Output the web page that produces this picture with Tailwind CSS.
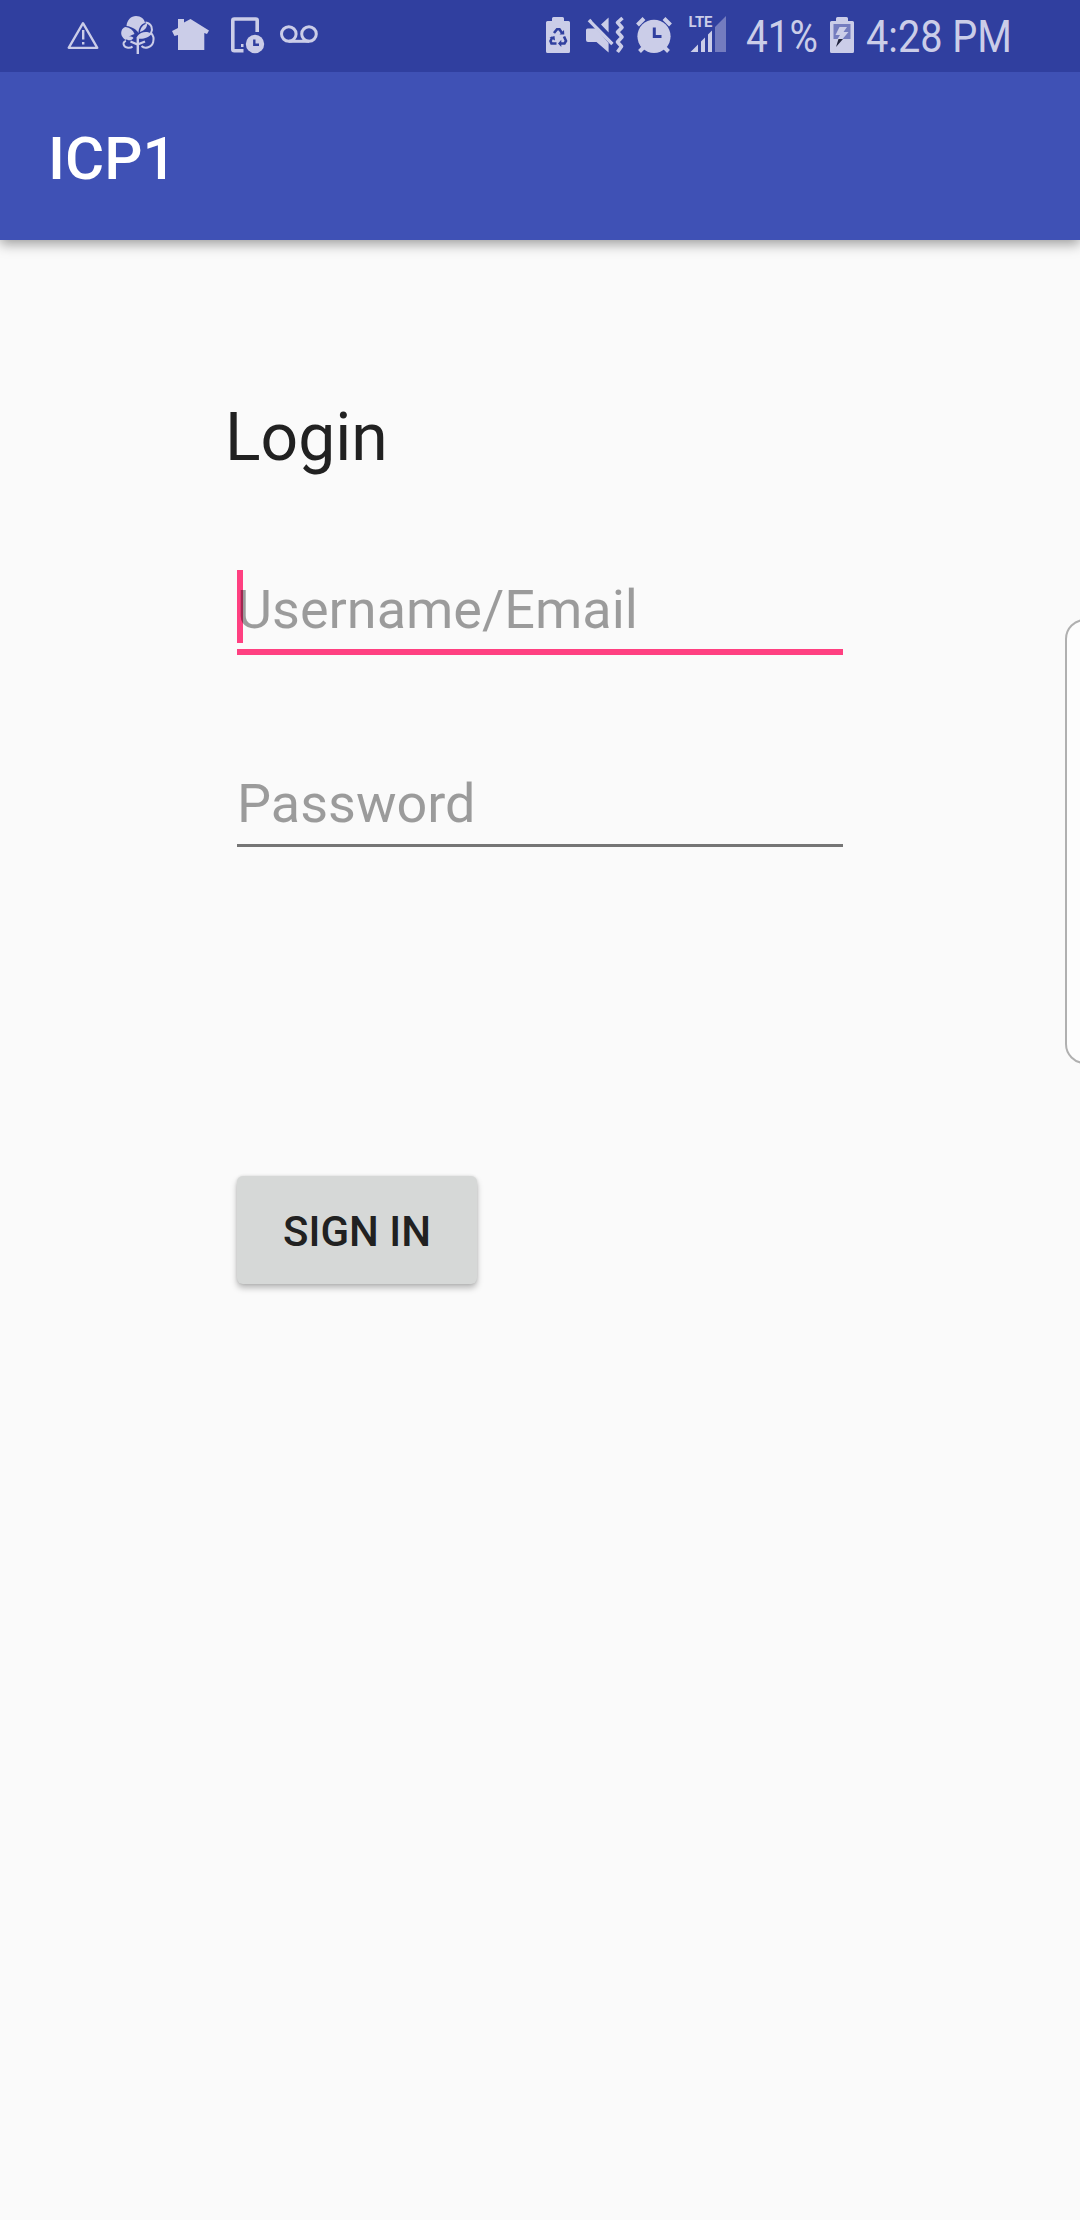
<!DOCTYPE html>
<html lang="en">
<head>
<meta charset="utf-8">
<title>ICP1</title>
<script src="https://cdn.jsdelivr.net/npm/@tailwindcss/browser@4"></script>
</head>
<body class="w-[1080px] h-[2220px] overflow-hidden bg-[#fafafa] font-[Roboto,sans-serif] text-[#212121] flex flex-col relative">
  <!-- Status bar -->
  <div class="relative z-10 h-[72px] shrink-0 bg-[#303f9f] text-[#cbcde8] flex items-start justify-between pl-[60px] pr-[20px]">
    <svg class="w-[270px] h-[72px]" viewBox="60 0 270 72" fill="currentColor">
      <path d="M83 23.2 L97.3 47.8 H68.7 Z" fill="none" stroke="currentColor" stroke-width="2.3" stroke-linejoin="round"/>
      <path d="M82 30h2.4v9.5h-2.4z M82 42h2.4v2.5h-2.4z"/>
      <!-- tree -->
      <path d="M126.5 26C127 20 131 16 136 16C141 16 144.500 19 145 23C141 24 138.500 28 138.500 33C137 30 132 26.500 126.500 26Z"/>
      <path d="M125.500 27C130 27.500 133 30 134.500 34C131 35 127.500 37 126 40C122 38 120.500 34 121.500 31C122 29 123.500 27.500 125.500 27Z"/>
      <path d="M140 32C140.500 28 143 24.500 147 23.500C147.500 27 145 30.500 140 32Z M137 36.500C141 31 147 31 152 33.500C149 38 142 39.500 138 38.500Z M125.500 38.500C128 35 132 36 133.500 38C131.500 41 128 41 125.500 38.500Z"/>
      <path d="M145.500 22.500C152 23.500 153 29 151 33C154 36 154 39 153.200 42C152 47 145 49.500 141.500 46 M126 41C122 42 123 47 128 47.800C130 48 131.500 47.500 132.500 46.500" fill="none" stroke="currentColor" stroke-width="2"/>
      <path d="M137.800 37V54 M130.500 41.500L137.500 44.500L145 41.500" fill="none" stroke="currentColor" stroke-width="2.400"/>
      <!-- home -->
      <path d="M178 19H184V22.500L190.500 19L209 30.500L207 34L204.300 33V50H178V35L174.500 36L172 31L178 28Z"/>
      <!-- phone with clock -->
      <path d="M257.200 32V20.500Q257.200 19 255.700 19H234.300Q232.800 19 232.800 20.500V49.200Q232.800 50.700 234.300 50.700H243.500" fill="none" stroke="currentColor" stroke-width="3.600"/>
      <path d="M241 44h2.500v3h-2.500z"/>
      <circle cx="255" cy="44" r="9.200"/>
      <path d="M254.300 39.500V44.700H259" fill="none" stroke="#303f9f" stroke-width="2.400"/>
      <g fill="none" stroke="currentColor" stroke-width="3">
        <circle cx="288.800" cy="34" r="7.300"/><circle cx="309" cy="34" r="7.300"/><path d="M288.800 41.300H309"/>
      </g>
    </svg>
    <div class="flex items-start">
      <svg class="w-[190px] h-[72px]" viewBox="540 0 190 72" fill="currentColor">
        <path d="M546 22.500Q546 21 547.500 21H552V18.500Q552 17 553.500 17H562.500Q564 17 564 18.500V21H568.500Q570 21 570 22.500V51.500Q570 53 568.500 53H547.500Q546 53 546 51.500Z"/>
        <!-- recycling arrows -->
        <g fill="none" stroke="#303f9f" stroke-width="2.600">
          <path d="M554 33L557 29.300H559.500L562 33"/><path d="M564 36.500L566 41L564.500 43.500H560"/><path d="M556.500 43.500H551.500L550.500 41L552.500 37"/>
        </g>
        <path d="M559.500 34.500L564.300 34.500L564 30Z M561.300 39.800V47L558 43.400Z M549.500 37.500L554.500 36L555 40.500Z" fill="#303f9f"/>
        <!-- muted speaker -->
        <path d="M587.500 28.500H596L608.600 43V52.500L596.500 42H588Q586 42 586 40V30Q586 28.500 587.500 28.500Z M608.600 17.500V32.500L601 24.500Z"/>
        <path d="M589 20L612.500 44" stroke="currentColor" stroke-width="3.600"/>
        <path d="M592.500 20.200L615 43" stroke="#303f9f" stroke-width="1.600"/>
        <path d="M622.500 18L617.500 22.500L622 27.500L617.500 32L622 37L617.500 42L621.500 46.500L617.500 52" fill="none" stroke="currentColor" stroke-width="3.600" stroke-linejoin="round"/>
        <!-- alarm -->
        <circle cx="654" cy="36.300" r="16.600"/>
        <path d="M637.500 25L644 18.500M664 18.500L670.500 25M645 46L639.500 51.500M663 46L668.500 51.500" stroke="currentColor" stroke-width="4"/>
        <path d="M654.300 27.500V36.600H661.500" fill="none" stroke="#303f9f" stroke-width="3"/>
        <!-- signal -->
        <text x="688.500" y="27" font-family="Roboto, sans-serif" font-size="14.800" font-weight="700" textLength="24" lengthAdjust="spacingAndGlyphs">LTE</text>
        <path d="M690.500 52L698 44.500V52Z M701 41.500L705 37.500V52H701Z M708 34.500L712 30.500V52H708Z"/>
        <path d="M715 52V27L726 16V52Z" fill="#747cbf"/>
      </svg>
      <svg class="w-[330px] h-[72px]" viewBox="730 0 330 72" fill="currentColor">
        <text x="746" y="52" font-family="Roboto, sans-serif" font-size="45" textLength="72" lengthAdjust="spacingAndGlyphs">41%</text>
        <path d="M830 22.500Q830 21 831.500 21H836V18.500Q836 17 837.500 17H846.500Q848 17 848 18.500V21H852.500Q854 21 854 22.500V51.500Q854 53 852.500 53H831.500Q830 53 830 51.500Z"/>
        <path d="M833.500 24H850.500V39H833.500Z" fill="#747cbf"/>
        <path d="M839.500 27H847L843.500 32H848.500L842.500 39H837.500L840 35H835.500Z"/>
        <path d="M838.500 39H843L836 47Z" fill="#20233c"/>
        <text x="866" y="52" font-family="Roboto, sans-serif" font-size="45" textLength="146" lengthAdjust="spacingAndGlyphs">4:28 PM</text>
      </svg>
    </div>
  </div>

  <!-- App bar -->
  <header class="h-[168px] shrink-0 bg-[#3f51b5] flex items-center pl-12 shadow-[0_4px_12px_rgba(0,0,0,0.38)]">
    <h1 class="text-[60px] leading-[70px] font-medium text-white pt-[5px]">ICP1</h1>
  </header>

  <main class="pl-[225px] flex flex-col items-start">
    <h2 class="mt-[159px] text-[66px] leading-[78px] font-normal">Login</h2>
    <div class="ml-3 mt-[93px] w-[606px] h-[85px] border-b-[6px] border-[#ff4081] relative">
      <span class="absolute left-0 top-0 w-[6px] h-[73px] bg-[#ff4081]"></span>
      <div class="relative pt-[8px] text-[54px] leading-[64px] text-black/38">Username/Email</div>
    </div>
    <div class="ml-3 mt-[109px] w-[606px] h-[83px] border-b-[3px] border-[#757575]">
      <div class="pt-[8px] text-[54px] leading-[64px] text-black/38">Password</div>
    </div>
    <button class="ml-3 mt-[329px] w-[240px] h-[108px] rounded-[6px] bg-[#d6d8d7] text-[42px] leading-[50px] font-medium pt-[4px] shadow-[0_4px_6px_rgba(0,0,0,0.26),0_0_3px_rgba(0,0,0,0.12)]">SIGN IN</button>
  </main>

  <!-- Edge panel handle -->
  <div class="absolute left-[1065px] top-[619px] w-[40px] h-[445px] rounded-[20px] border-2 border-[#b0b0b0] bg-[#fdfdfd]"></div>
</body>
</html>
